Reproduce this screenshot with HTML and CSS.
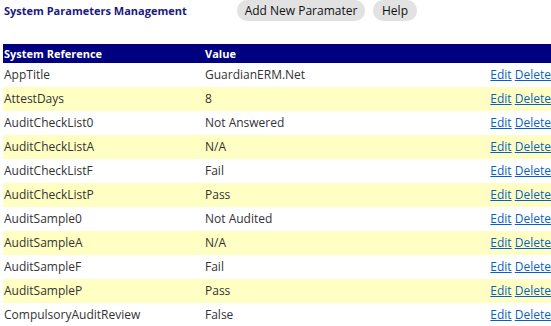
FILE: index.html
```html
<!DOCTYPE html>
<html>
<head>
<meta charset="utf-8">
<link rel="stylesheet" href="styles.css">
</head>
<body>
<div class="topbar">
  <h1 class="title">System Parameters Management</h1>
  <div class="actions">
    <button class="btn btn-add">Add New Paramater</button>
    <button class="btn btn-help">Help</button>
  </div>
</div>
<table class="grid">
  <thead>
    <tr><th class="c-ref">System Reference</th><th class="c-val">Value</th><th class="c-act"></th></tr>
  </thead>
  <tbody>
    <tr><td>AppTitle</td><td>GuardianERM.Net</td><td class="c-act"><a href="#">Edit</a> <a href="#">Delete</a></td></tr>
    <tr class="alt"><td>AttestDays</td><td>8</td><td class="c-act"><a href="#">Edit</a> <a href="#">Delete</a></td></tr>
    <tr><td>AuditCheckList0</td><td>Not Answered</td><td class="c-act"><a href="#">Edit</a> <a href="#">Delete</a></td></tr>
    <tr class="alt"><td>AuditCheckListA</td><td>N/A</td><td class="c-act"><a href="#">Edit</a> <a href="#">Delete</a></td></tr>
    <tr><td>AuditCheckListF</td><td>Fail</td><td class="c-act"><a href="#">Edit</a> <a href="#">Delete</a></td></tr>
    <tr class="alt"><td>AuditCheckListP</td><td>Pass</td><td class="c-act"><a href="#">Edit</a> <a href="#">Delete</a></td></tr>
    <tr><td>AuditSample0</td><td>Not Audited</td><td class="c-act"><a href="#">Edit</a> <a href="#">Delete</a></td></tr>
    <tr class="alt"><td>AuditSampleA</td><td>N/A</td><td class="c-act"><a href="#">Edit</a> <a href="#">Delete</a></td></tr>
    <tr><td>AuditSampleF</td><td>Fail</td><td class="c-act"><a href="#">Edit</a> <a href="#">Delete</a></td></tr>
    <tr class="alt"><td>AuditSampleP</td><td>Pass</td><td class="c-act"><a href="#">Edit</a> <a href="#">Delete</a></td></tr>
    <tr><td>CompulsoryAuditReview</td><td>False</td><td class="c-act"><a href="#">Edit</a> <a href="#">Delete</a></td></tr>
  </tbody>
</table>
</body>
</html>
```
FILE: styles.css
```css
html, body {
  margin: 0;
  padding: 0;
  background: #fff;
}
body {
  font-family: "Open Sans", "Noto Sans", sans-serif;
  font-size: 12px;
  color: #333;
  overflow: hidden;
}
.topbar {
  display: flex;
  align-items: flex-start;
  height: 44px;
}
.title {
  margin: 0;
  padding: 2px 0 0 4px;
  width: 233px;
  font-size: 11px;
  font-weight: bold;
  color: #1a1a80;
  line-height: 17px;
}
.actions {
  display: flex;
  gap: 8px;
}
.btn {
  font-family: inherit;
  font-size: 12px;
  color: #111;
  background: #e2e2e2;
  border: none;
  border-radius: 10px;
  height: 21px;
  padding: 0;
  line-height: 21px;
}
.btn-add { width: 128px; }
.btn-help { width: 44px; }
.grid {
  margin-left: 3px;
  width: 548px;
  border-collapse: collapse;
}
.grid th {
  background: #000080;
  color: #fff;
  font-size: 11px;
  font-weight: bold;
  text-align: left;
  height: 19px;
  padding: 0 1px;
  line-height: 19px;
}
.grid td {
  height: 24px;
  padding: 0 1px;
  line-height: 24px;
  white-space: nowrap;
}
.grid .c-ref { width: 199px; }
.grid .c-val { width: 200px; }
.grid .c-act { text-align: right; padding-right: 0; }
.grid tr.alt td { background: #ffffc4; }
.grid a {
  color: #0a5fc0;
  text-decoration: underline;
}
```
